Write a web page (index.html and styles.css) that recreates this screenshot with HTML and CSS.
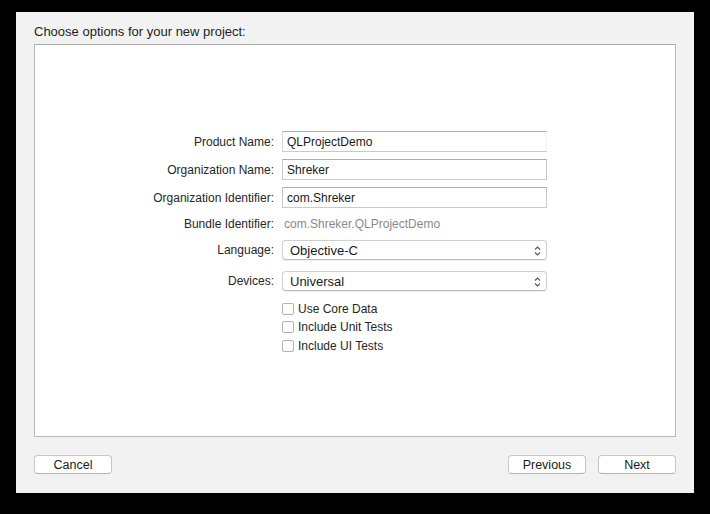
FILE: index.html
```html
<!DOCTYPE html>
<html>
<head>
<meta charset="utf-8">
<link rel="stylesheet" href="styles.css">
</head>
<body>
<div class="window">
  <div class="title">Choose options for your new project:</div>
  <div class="panel">
    <div class="form">
      <div class="row r-product">
        <div class="label">Product Name:</div>
        <div class="field field-focus">QLProjectDemo</div>
      </div>
      <div class="row r-gap7">
        <div class="label">Organization Name:</div>
        <div class="field">Shreker</div>
      </div>
      <div class="row r-gap7">
        <div class="label">Organization Identifier:</div>
        <div class="field">com.Shreker</div>
      </div>
      <div class="row r-gap7 r-bundle">
        <div class="label">Bundle Identifier:</div>
        <div class="value">com.Shreker.QLProjectDemo</div>
      </div>
      <div class="row r-gap7 r-popup">
        <div class="label">Language:</div>
        <div class="popup"><span>Objective-C</span>
          <svg class="chev" width="7" height="10" viewBox="0 0 7 10"><path d="M1 3.5 L3.5 1 L6 3.5 M1 6.5 L3.5 9 L6 6.5" fill="none" stroke="#555" stroke-width="1.1"/></svg>
        </div>
      </div>
      <div class="row r-gap11 r-popup">
        <div class="label">Devices:</div>
        <div class="popup"><span>Universal</span>
          <svg class="chev" width="7" height="10" viewBox="0 0 7 10"><path d="M1 3.5 L3.5 1 L6 3.5 M1 6.5 L3.5 9 L6 6.5" fill="none" stroke="#555" stroke-width="1.1"/></svg>
        </div>
      </div>
      <div class="row r-gap9 r-check">
        <div class="label"></div>
        <label class="check"><span class="box"></span>Use Core Data</label>
      </div>
      <div class="row r-check">
        <div class="label"></div>
        <label class="check"><span class="box"></span>Include Unit Tests</label>
      </div>
      <div class="row r-gap1 r-check">
        <div class="label"></div>
        <label class="check"><span class="box"></span>Include UI Tests</label>
      </div>
    </div>
  </div>
  <div class="buttons">
    <div class="btn">Cancel</div>
    <div class="spacer"></div>
    <div class="btn">Previous</div>
    <div class="btn">Next</div>
  </div>
</div>
</body>
</html>
```

FILE: styles.css
```css
html, body {
  margin: 0;
  padding: 0;
  background: #000;
}
body {
  padding: 12px 16px;
  font-family: "Liberation Sans", Arial, sans-serif;
  color: #222;
}
.window {
  width: 678px;
  height: 481px;
  box-sizing: border-box;
  background: #f2f2f2;
  padding: 11px 18px 19px 18px;
  display: flex;
  flex-direction: column;
}
.title {
  font-size: 13px;
  line-height: 17px;
  height: 16px;
  color: #1e1e1e;
}
.panel {
  margin-top: 5px;
  height: 393px;
  box-sizing: border-box;
  background: #fff;
  border: 1px solid #b9b9b9;
  border-top-color: #a9a9a9;
}
.form {
  padding-top: 86px;
  display: flex;
  flex-direction: column;
}
.row {
  display: grid;
  grid-template-columns: 239px 265px;
  column-gap: 8px;
  align-items: center;
  height: 21px;
  font-size: 12px;
  line-height: 15px;
}
.r-gap7 { margin-top: 7px; }
.r-gap11 { margin-top: 11px; }
.r-gap9 { margin-top: 9px; }
.r-gap1 { margin-top: 1px; }
.r-bundle { height: 18px; }
.r-popup { height: 20px; }
.r-check { height: 18px; }
.label {
  text-align: right;
  color: #262626;
  white-space: nowrap;
  padding-top: 1px;
}
.field {
  height: 21px;
  box-sizing: border-box;
  border: 1px solid #cacaca;
  border-top-color: #acacac;
  padding-left: 4px;
  line-height: 20px;
  color: #1a1a1a;
  background: #fff;
}
.field-focus {
  border-right-color: #f4f4f4;
  border-left-color: #d6d6d6;
}
.value {
  color: #8a8a8a;
  padding-left: 2px;
}
.popup {
  height: 20px;
  box-sizing: border-box;
  border: 1px solid #cfcfcf;
  border-bottom-color: #bdbdbd;
  border-radius: 4px;
  background: #fff;
  box-shadow: 0 0.5px 1px rgba(0,0,0,0.08);
  display: flex;
  align-items: center;
  justify-content: space-between;
  padding: 1px 5px 0 7px;
  font-size: 13px;
  color: #1a1a1a;
}
.chev { display: block; }
.check {
  display: flex;
  align-items: center;
  gap: 4px;
  color: #262626;
}
.box {
  width: 12px;
  height: 12px;
  box-sizing: border-box;
  border: 1px solid #b3b3b3;
  border-radius: 2px;
  background: #fff;
}
.buttons {
  margin-top: 18px;
  display: flex;
  gap: 12px;
}
.spacer { flex: 1; }
.btn {
  width: 78px;
  height: 19px;
  box-sizing: border-box;
  border: 1px solid #c6c6c6;
  border-bottom-color: #b2b2b2;
  border-radius: 4px;
  background: #fff;
  font-size: 12.5px;
  line-height: 18px;
  text-align: center;
  color: #1a1a1a;
}
```
